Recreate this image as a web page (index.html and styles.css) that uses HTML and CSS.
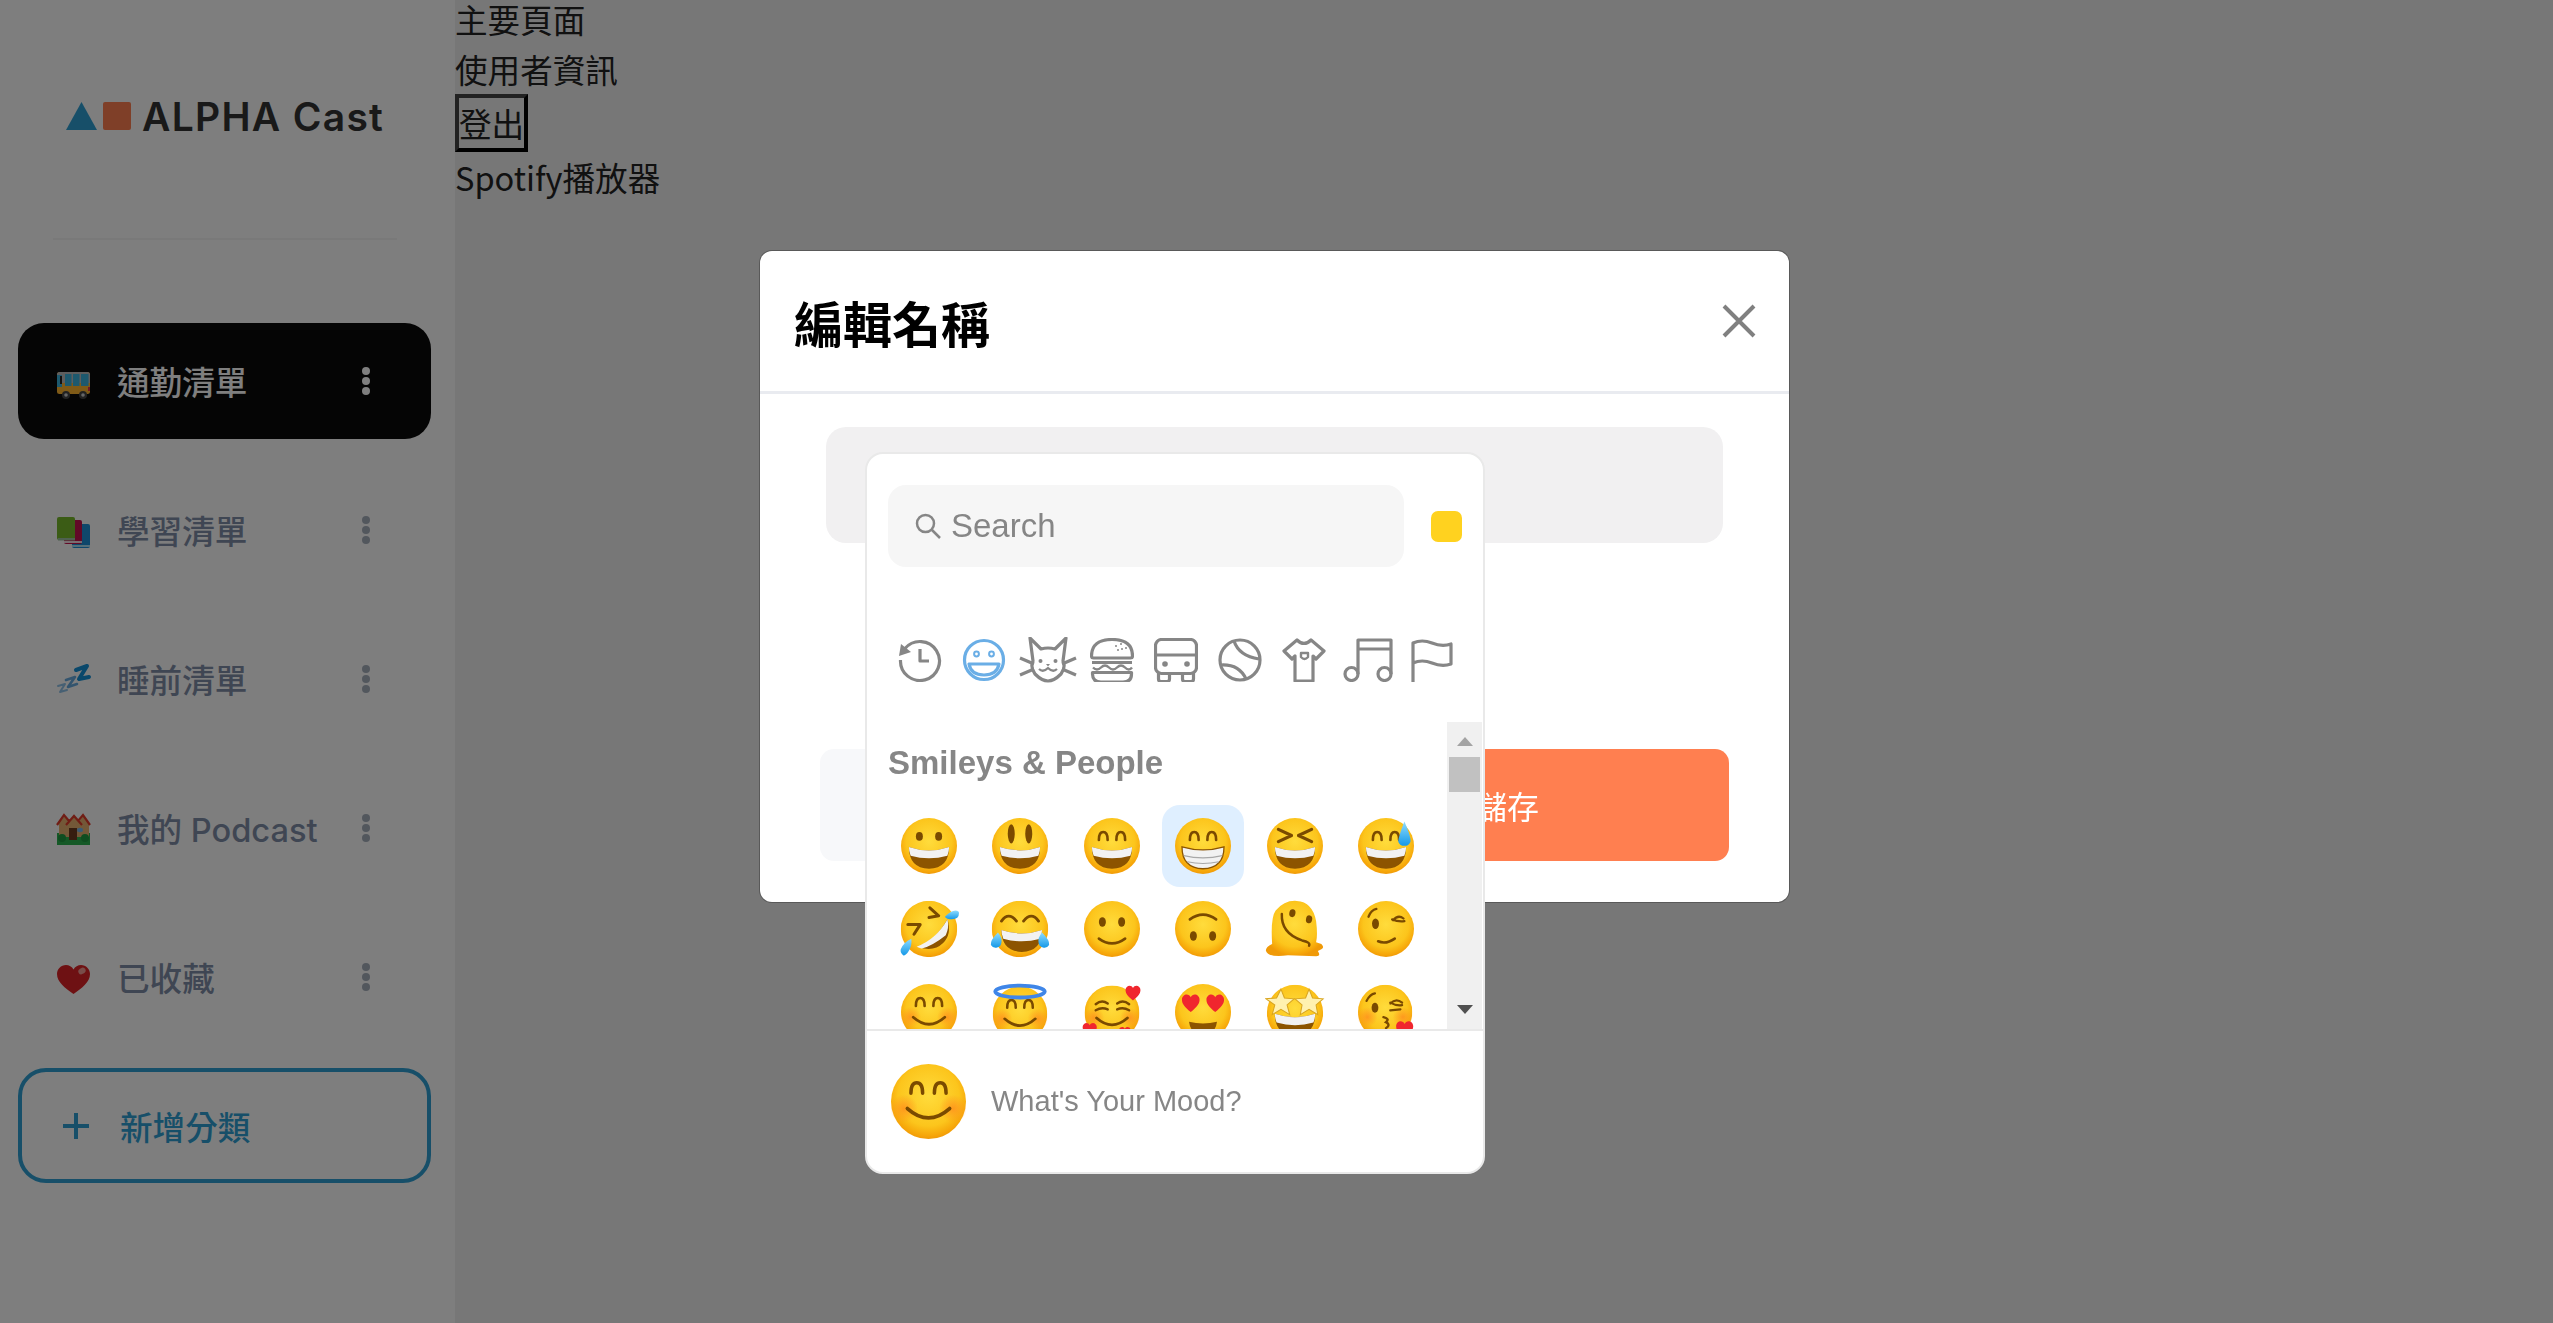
FILE: index.html
```html
<!DOCTYPE html>
<html lang="zh-Hant">
<head>
<meta charset="utf-8">
<title>ALPHA Cast</title>
<link rel="stylesheet" href="styles.css">
</head>
<body>
<svg class="defs" aria-hidden="true">
  <defs>
    <radialGradient id="face" cx="50%" cy="42%" r="58%">
      <stop offset="0" stop-color="#ffdc3c"/>
      <stop offset=".7" stop-color="#fcc51c"/>
      <stop offset=".93" stop-color="#f6a509"/>
      <stop offset="1" stop-color="#f09a08"/>
    </radialGradient>
    <radialGradient id="blushL" cx="50%" cy="50%" r="50%"><stop offset="0" stop-color="#ff8a1e" stop-opacity=".75"/><stop offset="1" stop-color="#ff8a1e" stop-opacity="0"/></radialGradient>
    <linearGradient id="drop" x1="0" y1="0" x2="0" y2="1"><stop offset="0" stop-color="#8fdcff"/><stop offset="1" stop-color="#1599e8"/></linearGradient>
    <symbol id="f" viewBox="0 0 64 64"><circle cx="32" cy="32" r="32" fill="url(#face)"/></symbol>
    <symbol id="arches" viewBox="0 0 64 64"><path d="M17 25Q17 16 22 16Q27 16 27 25M37 25Q37 16 42 16Q47 16 47 25" fill="none" stroke="#7a4a00" stroke-width="3" stroke-linecap="round"/></symbol>
    <symbol id="laugh" viewBox="0 0 64 64"><path d="M9 33Q32 41 55 33Q55 57 32 58Q9 57 9 33Z" fill="#8c5400"/><path d="M9 33Q32 41 55 33Q55 38 53 43Q32 49 11 43Q9 38 9 33Z" fill="#f2f2f2"/></symbol>
    <symbol id="blush" viewBox="0 0 64 64"><circle cx="32" cy="32" r="32" fill="url(#face)"/><circle cx="11" cy="38" r="12" fill="url(#blushL)"/><circle cx="53" cy="38" r="12" fill="url(#blushL)"/></symbol>
    <symbol id="smile" viewBox="0 0 64 64"><path d="M14 38Q32 54 50 38" fill="none" stroke="#7a4a00" stroke-width="3.200" stroke-linecap="round"/></symbol>
    <symbol id="heart" viewBox="0 0 24 24"><path d="M12 23C5 17 1 13 1 7.500C1 3.500 4 1 7 1C9 1 11 2 12 4.500C13 2 15 1 17 1C20 1 23 3.500 23 7.500C23 13 19 17 12 23Z" fill="#f0262e"/></symbol>

    <symbol id="e1" viewBox="0 0 64 64"><use href="#f"/><ellipse cx="21" cy="21" rx="4" ry="5" fill="#7a4a00"/><ellipse cx="43" cy="21" rx="4" ry="5" fill="#7a4a00"/><use href="#laugh"/></symbol>
    <symbol id="e2" viewBox="0 0 64 64"><use href="#f"/><ellipse cx="22" cy="18" rx="4" ry="11" fill="#7a4a00"/><ellipse cx="42" cy="18" rx="4" ry="11" fill="#7a4a00"/><use href="#laugh"/></symbol>
    <symbol id="e3" viewBox="0 0 64 64"><use href="#f"/><use href="#arches"/><use href="#laugh"/></symbol>
    <symbol id="e4" viewBox="0 0 64 64"><use href="#f"/><use href="#arches"/><path d="M8 33Q32 40 56 33Q56 57 32 58Q8 57 8 33Z" fill="#f2f2f2" stroke="#8c5400" stroke-width="1.500"/><path d="M10 43Q32 48 54 43M14 50Q32 54 50 50" fill="none" stroke="#a8a8a8" stroke-width="1.400"/></symbol>
    <symbol id="e5" viewBox="0 0 64 64"><use href="#f"/><path d="M13 13L28 20L13 27M51 13L36 20L51 27" fill="none" stroke="#7a4a00" stroke-width="3.600" stroke-linecap="round" stroke-linejoin="round"/><use href="#laugh"/></symbol>
    <symbol id="e6" viewBox="0 0 64 64"><use href="#f"/><use href="#arches"/><use href="#laugh"/><path d="M53 4Q61 22 60 27A7.500 7.500 0 0 1 46 27Q46 22 53 4Z" fill="url(#drop)"/></symbol>

    <symbol id="e7" viewBox="0 0 68 64"><g transform="translate(2 0)"><use href="#f" width="64" height="64"/><path d="M33 8L43 17L32 19M8 27L22 27L15 38" fill="none" stroke="#7a4a00" stroke-width="3.400" stroke-linecap="round" stroke-linejoin="round"/><path d="M53 21Q58 38 48 48Q38 58 21 53Q40 44 53 21Z" fill="#8c5400"/><path d="M53 21Q55 31 51 39Q36 51 24 54Q22 54 18 52Q40 44 53 21Z" fill="#f2f2f2"/></g><path d="M68 14Q68 21 60 21Q54 21 52 18Q59 11 64 11Q68 11 68 14Z" fill="url(#drop)"/><path d="M5 62Q1 59 2 55Q5 47 14 43Q15 51 11 57Q8 62 5 62Z" fill="url(#drop)"/></symbol>
    <symbol id="e8" viewBox="0 0 68 64"><g transform="translate(2 0)"><use href="#f" width="64" height="64"/><path d="M11 23Q19 12 28 23M36 23Q45 12 53 23" fill="none" stroke="#7a4a00" stroke-width="3.200" stroke-linecap="round"/><use href="#laugh"/></g><path d="M9 36Q14 42 13 47A6.500 6.500 0 0 1 1 50Q0 45 9 36Z" fill="url(#drop)"/><path d="M59 36Q68 45 67 50A6.500 6.500 0 0 1 55 47Q54 42 59 36Z" fill="url(#drop)"/></symbol>
    <symbol id="e9" viewBox="0 0 64 64"><use href="#f"/><ellipse cx="21" cy="24" rx="4" ry="5.500" fill="#7a4a00"/><ellipse cx="43" cy="24" rx="4" ry="5.500" fill="#7a4a00"/><path d="M17 43Q32 54 47 43" fill="none" stroke="#7a4a00" stroke-width="3" stroke-linecap="round"/></symbol>
    <symbol id="e10" viewBox="0 0 64 64"><use href="#f"/><ellipse cx="21" cy="40" rx="4" ry="5.500" fill="#7a4a00"/><ellipse cx="43" cy="40" rx="4" ry="5.500" fill="#7a4a00"/><path d="M17 21Q32 10 47 21" fill="none" stroke="#7a4a00" stroke-width="3" stroke-linecap="round"/></symbol>
    <symbol id="e11" viewBox="0 0 68 66"><path d="M8 50Q6 20 12 12Q22 0 36 1Q54 2 58 24Q60 40 58 48L64 50Q68 54 64 56L60 58Q64 64 58 64L26 63Q4 66 1 58Q0 54 8 50Z" fill="url(#face)"/><ellipse cx="31" cy="15" rx="3.500" ry="4.500" fill="#7a4a00" transform="rotate(12 31 15)"/><ellipse cx="50" cy="22" rx="3.500" ry="4.500" fill="#7a4a00" transform="rotate(12 50 22)"/><path d="M19 16Q18 38 42 46Q52 48 50 52" fill="none" stroke="#7a4a00" stroke-width="2.800" stroke-linecap="round"/></symbol>
    <symbol id="e12" viewBox="0 0 64 64"><use href="#f"/><path d="M12 18Q15 10 21 9M40 22Q46 15 52 20M39 21Q46 24 53 23" fill="none" stroke="#7a4a00" stroke-width="2.600" stroke-linecap="round"/><ellipse cx="20" cy="26" rx="4" ry="6" fill="#7a4a00"/><path d="M23 46Q32 50 42 43" fill="none" stroke="#7a4a00" stroke-width="3" stroke-linecap="round"/></symbol>

    <symbol id="e13" viewBox="0 0 64 64"><use href="#blush"/><use href="#arches"/><use href="#smile"/></symbol>
    <symbol id="e14" viewBox="0 0 68 68"><g transform="translate(2 4)"><use href="#blush" width="64" height="64"/><use href="#arches" width="64" height="64"/><use href="#smile" width="64" height="64"/></g><ellipse cx="34" cy="10" rx="29" ry="7" fill="none" stroke="#3f86e8" stroke-width="4.500"/></symbol>
    <symbol id="e15" viewBox="0 0 70 66"><g transform="translate(3 2)"><use href="#blush" width="64" height="64"/><path d="M13 22Q20 16 27 21M38 21Q45 16 52 22M13 29Q20 25 27 28M38 28Q45 25 52 29" fill="none" stroke="#7a4a00" stroke-width="2.800" stroke-linecap="round"/><use href="#smile" width="64" height="64"/></g><use href="#heart" x="50" y="0" width="19" height="22"/><use href="#heart" x="0" y="44" width="18" height="20"/><use href="#heart" x="42" y="50" width="16" height="15"/></symbol>
    <symbol id="e16" viewBox="0 0 64 64"><use href="#f"/><use href="#heart" x="7" y="10" width="22" height="24"/><use href="#heart" x="35" y="10" width="22" height="24"/><path d="M16 43Q32 47 48 43Q46 58 32 58Q18 58 16 43Z" fill="#8c5400"/></symbol>
    <symbol id="e17" viewBox="0 0 68 66"><g transform="translate(2 2)"><use href="#f" width="64" height="64"/><use href="#laugh" width="64" height="64"/></g><path d="M18 7L22 17L33 18L25 25L28 36L18 30L8 36L11 25L1 18L13 17Z" fill="#fff1b0" stroke="#d9a520" stroke-width="1.200"/><path d="M50 7L54 17L66 18L58 25L60 36L50 30L40 36L42 25L34 18L46 17Z" fill="#fff1b0" stroke="#d9a520" stroke-width="1.200"/></symbol>
    <symbol id="e18" viewBox="0 0 66 64"><use href="#blush" width="64" height="64"/><path d="M10 19Q14 11 20 10M38 22Q45 15 52 21M38 21Q45 25 52 24M38 30L50 29" fill="none" stroke="#7a4a00" stroke-width="2.600" stroke-linecap="round"/><ellipse cx="20" cy="27" rx="4" ry="6" fill="#7a4a00"/><path d="M30 38Q38 40 33 44Q39 47 33 51" fill="none" stroke="#7a4a00" stroke-width="2.800" stroke-linecap="round"/><use href="#heart" x="44" y="42" width="22" height="22"/></symbol>
  </defs>
</svg>

<div class="app">
  <aside class="sidebar">
    <div class="logo">
      <svg class="logo-tri" viewBox="0 0 31 28"><path d="M15.500 0L31 28H0Z"/></svg>
      <span class="logo-sq"></span>
      <span class="logo-text">ALPHA Cast</span>
    </div>
    <hr class="side-rule">
    <ul class="cats">
      <li class="cat cat-active">
        <svg class="cat-emoji" viewBox="0 0 33 33"><g transform="translate(0 3)"><rect x="0" y="4" width="33" height="22" rx="2.500" fill="#ffb52e"/><path d="M0 15V6.500A2.500 2.500 0 0 1 2.500 4H30.500A2.500 2.500 0 0 1 33 6.500V15Z" fill="#bdbdbd"/><path d="M8 6h6.500v12H8ZM16 6h6.500v12H16ZM24 6h7.500v12H24Z" fill="#3bb2dd"/><path d="M0 7h5v12H0Z" fill="#3bb2dd"/><path d="M3 8h2v8H3Z" fill="#222"/><circle cx="9" cy="27" r="4" fill="#444"/><circle cx="9" cy="27" r="1.800" fill="#ccc"/><circle cx="26" cy="27" r="4" fill="#444"/><circle cx="26" cy="27" r="1.800" fill="#ccc"/><rect x="31" y="19" width="2" height="4" fill="#e2304c"/></g></svg>
        <span class="cat-name">通勤清單</span>
        <span class="kebab"><i></i><i></i><i></i></span>
      </li>
      <li class="cat">
        <svg class="cat-emoji" viewBox="0 0 33 33"><g transform="translate(0 3)"><rect x="15" y="7" width="18" height="24" rx="2" fill="#1f8fd6"/><path d="M15 28h18v2H15Z" fill="#a8dcf2"/><rect x="7" y="3" width="18" height="24" rx="2" fill="#c4134f"/><path d="M7 24h18v2H7Z" fill="#f3dce3"/><rect x="0" y="0" width="18" height="23" rx="2" fill="#77b82b"/><path d="M1 21h17v2.500H1Z" fill="#9ec3a0"/></g></svg>
        <span class="cat-name">學習清單</span>
        <span class="kebab"><i></i><i></i><i></i></span>
      </li>
      <li class="cat">
        <svg class="cat-emoji" viewBox="0 0 33 33"><path d="M19 7L30 3L22 16L32 14" fill="none" stroke="#1490d6" stroke-width="4" stroke-linejoin="round" stroke-linecap="round"/><path d="M9 17L18 14L11 24L20 21" fill="none" stroke="#66a9dd" stroke-width="2.600" stroke-linejoin="round" stroke-linecap="round"/><path d="M1 23L8 21L3 29L10 27" fill="none" stroke="#8fc1e6" stroke-width="2" stroke-linejoin="round" stroke-linecap="round"/></svg>
        <span class="cat-name">睡前清單</span>
        <span class="kebab"><i></i><i></i><i></i></span>
      </li>
      <li class="cat">
        <svg class="cat-emoji" viewBox="0 0 33 33"><rect x="0" y="21" width="33" height="12" fill="#2bb34f"/><path d="M2 10L8 4L13 9L17 5L22 10L26 4L32 11V25H2Z" fill="#e6b070"/><path d="M0 13L7 3L12 9M9 13L17 4L25 13M21 9L26 3L33 13" fill="none" stroke="#e03a2a" stroke-width="2.200"/><rect x="12" y="16" width="8" height="12" fill="#6d3a1f"/><ellipse cx="23" cy="18" rx="3" ry="2.200" fill="#77b4e6"/><circle cx="5" cy="26" r="4" fill="#1f9a41"/><circle cx="28" cy="26" r="4" fill="#1f9a41"/></svg>
        <span class="cat-name">我的 Podcast</span>
        <span class="kebab"><i></i><i></i><i></i></span>
      </li>
      <li class="cat">
        <svg class="cat-emoji" viewBox="0 0 33 33"><g transform="translate(0 1)"><path d="M16.500 32C8 26 0 20 0 12C0 7 4 3 9 3C12 3 15 4.500 16.500 7.500C18 4.500 21 3 24 3C29 3 33 7 33 12C33 20 25 26 16.500 32Z" fill="#dd2326"/><ellipse cx="25" cy="9" rx="3.800" ry="3" fill="#f29a94" transform="rotate(-30 25 9)"/></g></svg>
        <span class="cat-name">已收藏</span>
        <span class="kebab"><i></i><i></i><i></i></span>
      </li>
    </ul>
    <button class="add-cat" type="button">
      <svg class="add-plus" viewBox="0 0 28 28"><path d="M14 1V27M1 14H27"/></svg>
      <span>新增分類</span>
    </button>
  </aside>

  <main class="main">
    <nav class="topnav">
      <div class="nav-line">主要頁面</div>
      <div class="nav-line">使用者資訊</div>
      <button class="logout" type="button">登出</button>
      <div class="nav-line">Spotify播放器</div>
    </nav>
  </main>
</div>

<div class="overlay">
  <section class="modal">
    <header class="modal-head">
      <h2 class="modal-title">編輯名稱</h2>
      <svg class="modal-close" viewBox="0 0 34 34"><path d="M2 2L32 32M32 2L2 32"/></svg>
    </header>
    <div class="modal-body">
      <div class="name-field">
        <div class="picker">
          <div class="search-row">
            <div class="search">
              <svg class="search-ico" viewBox="0 0 26 26"><circle cx="10.500" cy="10.500" r="8.500"/><path d="M17 17L25 25"/></svg>
              <span>Search</span>
            </div>
            <span class="swatch"></span>
          </div>
          <div class="tabs">
            <span class="tab"><svg class="ico" viewBox="0 0 44 44"><path d="M7 10.500A19.500 19.500 0 1 1 2.500 22"/><path class="solid" d="M1 18L3 6L13 14Z"/><path d="M22 11V23H31"/></svg></span>
            <span class="tab tab-on"><svg class="ico" viewBox="0 0 44 44"><circle cx="22" cy="22" r="19.500"/><circle cx="14.500" cy="16" r="2.400" stroke-width="2"/><circle cx="29.500" cy="16" r="2.400" stroke-width="2"/><path d="M7 26H37Q35 37 22 37Q9 37 7 26Z"/></svg></span>
            <span class="tab"><svg class="ico ico-cat" viewBox="0 0 58 46"><path d="M14 24L11 1L22 12Q29 10 36 12L47 1L44 24Q47 30 42 37Q35 44 29 44Q23 44 16 37Q11 30 14 24Z"/><path d="M1 21L15 27M1 38L15 32M57 21L43 27M57 38L43 32"/><path class="solid" d="M27 27h4l-2 2.500Z"/><circle class="solid" cx="21.500" cy="24" r="2"/><circle class="solid" cx="36.500" cy="24" r="2"/><path d="M20 32Q24 36 29 31Q34 36 38 32" stroke-width="2.200"/></svg></span>
            <span class="tab"><svg class="ico" viewBox="0 0 44 44"><path d="M1.500 18Q1.500 1.500 22 1.500Q42.500 1.500 42.500 18Q42.500 20 40.500 20H3.500Q1.500 20 1.500 18Z"/><path d="M2 24.500H42"/><path d="M3 29.500Q7 33.500 11 29.500T19 29.500T27 29.500T35 29.500T42 29.500" stroke-width="2.400"/><path d="M2.500 34.500H41.500V36Q41.500 44 33 44H11Q2.500 44 2.500 36Z"/><g class="solid"><circle cx="26" cy="8" r="1"/><circle cx="31" cy="6" r="1"/><circle cx="32" cy="11" r="1"/><circle cx="36" cy="10" r="1"/><circle cx="28" cy="12" r="1"/></g></svg></span>
            <span class="tab"><svg class="ico" viewBox="0 0 44 44"><rect x="1.500" y="1.500" width="41" height="34" rx="6"/><path d="M1.500 17H42.500"/><path d="M4.500 35V41Q4.500 43.500 7 43.500H13Q15.500 43.500 15.500 41V35M28.500 35V41Q28.500 43.500 31 43.500H37Q39.500 43.500 39.500 41V35"/><circle class="solid" cx="11" cy="26" r="2.800"/><circle class="solid" cx="33" cy="26" r="2.800"/></svg></span>
            <span class="tab"><svg class="ico" viewBox="0 0 44 44"><circle cx="22" cy="22" r="20"/><path d="M16 3Q21 18 41 21M3 27Q21 26 28 41"/></svg></span>
            <span class="tab"><svg class="ico" viewBox="0 0 44 44"><path d="M15 2L2 13L10 21L13 18V43H31V18L34 21L42 13L29 2Q22 9 15 2Z"/><path d="M19 15H26V19Q22.500 23 19 19Z" stroke-width="2.400"/></svg></span>
            <span class="tab"><svg class="ico ico-music" viewBox="0 0 50 44"><path d="M15 36V2H48V36M15 11H48"/><circle cx="8.500" cy="36" r="6.500"/><circle cx="41.500" cy="36" r="6.500"/></svg></span>
            <span class="tab"><svg class="ico" viewBox="0 0 44 44"><path d="M3 44V5Q12 1 22 5Q32 9 41 6V26Q32 29 22 25Q12 21 3 25" stroke-linecap="round"/></svg></span>
          </div>
          <div class="list-wrap">
            <div class="list">
              <h3 class="list-title">Smileys &amp; People</h3>
              <div class="grid">
                <span class="cell"><svg class="emoji" viewBox="0 0 64 64"><use href="#e1"/></svg></span>
                <span class="cell"><svg class="emoji" viewBox="0 0 64 64"><use href="#e2"/></svg></span>
                <span class="cell"><svg class="emoji" viewBox="0 0 64 64"><use href="#e3"/></svg></span>
                <span class="cell cell-on"><svg class="emoji" viewBox="0 0 64 64"><use href="#e4"/></svg></span>
                <span class="cell"><svg class="emoji" viewBox="0 0 64 64"><use href="#e5"/></svg></span>
                <span class="cell"><svg class="emoji" viewBox="0 0 64 64"><use href="#e6"/></svg></span>
                <span class="cell"><svg class="emoji emoji-w" viewBox="0 0 68 64"><use href="#e7"/></svg></span>
                <span class="cell"><svg class="emoji emoji-w" viewBox="0 0 68 64"><use href="#e8"/></svg></span>
                <span class="cell"><svg class="emoji" viewBox="0 0 64 64"><use href="#e9"/></svg></span>
                <span class="cell"><svg class="emoji" viewBox="0 0 64 64"><use href="#e10"/></svg></span>
                <span class="cell"><svg class="emoji emoji-w" viewBox="0 0 68 66"><use href="#e11"/></svg></span>
                <span class="cell"><svg class="emoji" viewBox="0 0 64 64"><use href="#e12"/></svg></span>
                <span class="cell"><svg class="emoji" viewBox="0 0 64 64"><use href="#e13"/></svg></span>
                <span class="cell"><svg class="emoji emoji-w" viewBox="0 0 68 68"><use href="#e14"/></svg></span>
                <span class="cell"><svg class="emoji emoji-w" viewBox="0 0 70 66"><use href="#e15"/></svg></span>
                <span class="cell"><svg class="emoji" viewBox="0 0 64 64"><use href="#e16"/></svg></span>
                <span class="cell"><svg class="emoji emoji-w" viewBox="0 0 68 66"><use href="#e17"/></svg></span>
                <span class="cell"><svg class="emoji" viewBox="0 0 66 64"><use href="#e18"/></svg></span>
              </div>
            </div>
            <div class="scrollbar">
              <span class="arrow arrow-up"></span>
              <span class="thumb"></span>
              <span class="arrow arrow-down"></span>
            </div>
          </div>
          <div class="preview">
            <svg class="preview-emoji" viewBox="0 0 64 64"><use href="#e13"/></svg>
            <span>What's Your Mood?</span>
          </div>
        </div>
      </div>
      <div class="actions">
        <button class="btn btn-cancel" type="button">取消</button>
        <button class="btn btn-save" type="button">儲存</button>
      </div>
    </div>
  </section>
</div>
</body>
</html>
```

FILE: styles.css
```css
* { box-sizing: border-box; }

html, body { height: 100%; }

body {
  margin: 0;
  font-family: "Noto Sans CJK TC", "Noto Sans", sans-serif;
  background: #eeeeee;
  color: #1f1f1f;
  overflow: hidden;
}

.defs { position: absolute; width: 0; height: 0; }

.app { display: flex; height: 1323px; }

/* sidebar */
.sidebar {
  width: 455px;
  flex: none;
  background: #fcfcfc;
  padding: 0 24px 0 18px;
}

.logo {
  display: flex;
  align-items: center;
  height: 232px;
  padding-left: 48px;
}

.logo-tri { width: 31px; height: 28px; fill: #2f9fd3; }
.logo-sq { width: 28px; height: 28px; margin-left: 6px; border-radius: 2px; background: #ff7f50; }
.logo-text {
  margin-left: 11px;
  font-family: Inter, "Noto Sans", sans-serif;
  font-size: 39px;
  font-weight: 600;
  letter-spacing: 1.3px;
  color: #333333;
  white-space: nowrap;
}

.side-rule {
  height: 2px;
  margin: 6px 34px 0 35px;
  border: 0;
  background: #f3f3f3;
}

.cats {
  list-style: none;
  margin: 83px 0 0;
  padding: 0;
  display: flex;
  flex-direction: column;
  gap: 33px;
}

.cat {
  display: flex;
  align-items: center;
  height: 116px;
  padding: 0 61px 0 39px;
  border-radius: 26px;
  font-family: Inter, "Noto Sans CJK TC", sans-serif;
  font-size: 32.600px;
  font-weight: 500;
  color: #7f8da6;
}

.cat-active { background: #0a0a0a; color: #ffffff; }
.cat-emoji { width: 33px; height: 33px; flex: none; overflow: visible; }
.cat-name { margin-left: 27px; margin-top: -2px; white-space: nowrap; }

.kebab {
  margin-left: auto;
  display: flex;
  flex-direction: column;
  gap: 2px;
  width: 8px;
  color: #a5aebb;
}
.cat-active .kebab { color: #ffffff; }
.kebab i { display: block; width: 8px; height: 8px; border-radius: 50%; background: currentColor; }

.add-cat {
  display: flex;
  align-items: center;
  width: 413px;
  height: 115px;
  margin-top: 33px;
  padding: 0 0 0 40px;
  border: 4px solid #2f9fd3;
  border-radius: 28px;
  background: transparent;
  font-family: "Noto Sans CJK TC", sans-serif;
  font-size: 32.600px;
  font-weight: 500;
  color: #2f9fd3;
}
.add-plus { width: 28px; height: 28px; flex: none; fill: none; stroke: currentColor; stroke-width: 4; }
.add-cat span { margin-left: 30px; }

/* main */
.main { flex: 1; min-width: 0; }

.topnav { margin-top: -6px; font-size: 32.600px; color: #222; }
.nav-line { line-height: 50px; }
.logout {
  display: block;
  height: 58px;
  padding: 0;
  border: 4px outset #444;
  background: transparent;
  font: inherit;
  line-height: 1;
  color: #222;
}

/* overlay + modal */
.overlay { position: fixed; inset: 0; background: rgba(0, 0, 0, 0.5); }

.modal {
  position: absolute;
  left: 760px;
  top: 251px;
  width: 1029px;
  height: 651px;
  border-radius: 12px;
  background: #ffffff;
  box-shadow: 0 0 0 1px rgba(0, 0, 0, 0.25);
}

.modal-head {
  display: flex;
  align-items: center;
  justify-content: space-between;
  height: 143px;
  padding: 0 33px 0 34px;
  border-bottom: 3px solid #e9ebf0;
}

.modal-title {
  margin: 0;
  font-size: 49px;
  font-weight: 600;
  color: #000;
  line-height: 1;
}

.modal-close { width: 34px; height: 34px; fill: none; stroke: #808080; stroke-width: 4; }

.modal-body { padding: 33px 60px 42px; }

.name-field {
  position: relative;
  height: 116px;
  margin: 0 6px;
  border-radius: 20px;
  background: #f1f0f1;
}

.actions {
  display: grid;
  grid-template-columns: 1fr 1fr;
  gap: 21px;
  margin-top: 206px;
}

.btn {
  height: 112px;
  border: 0;
  border-radius: 14px;
  font-family: "Noto Sans CJK TC", sans-serif;
  font-size: 32px;
}
.btn-cancel { background: #f7f8fa; color: #444; }
.btn-save { background: #ff7f50; color: #fff; }

/* emoji picker */
.picker {
  position: absolute;
  left: 39px;
  top: 25px;
  z-index: 2;
  display: flex;
  flex-direction: column;
  width: 620px;
  height: 722px;
  border: 2px solid #e9e9e9;
  border-radius: 18px;
  background: #fff;
  font-family: "Liberation Sans", Arial, sans-serif;
  color: #868686;
  overflow: hidden;
}

.search-row {
  display: flex;
  align-items: center;
  gap: 27px;
  padding: 31px 21px 0;
}

.search {
  display: flex;
  align-items: center;
  gap: 10px;
  width: 516px;
  height: 82px;
  padding-left: 27px;
  border-radius: 18px;
  background: #f6f6f6;
  font-size: 33px;
}
.search-ico { width: 26px; height: 26px; fill: none; stroke: #868686; stroke-width: 2.500; }

.swatch { width: 31px; height: 31px; border-radius: 7px; background: #ffd21f; }

.tabs {
  display: flex;
  height: 44px;
  margin-top: 71px;
  padding-left: 21px;
}
.tab {
  display: flex;
  align-items: center;
  justify-content: center;
  width: 64px;
  flex: none;
  color: #868686;
}
.tab-on { color: #6aaee6; }
.ico { width: 44px; height: 44px; flex: none; fill: none; stroke: currentColor; stroke-width: 3.200; stroke-linejoin: round; }
.ico-cat { width: 58px; height: 46px; }
.ico-music { width: 50px; }
.ico .solid { fill: currentColor; stroke: none; }

.list-wrap { display: flex; height: 307px; margin-top: 40px; }
.list { flex: 1; min-width: 0; overflow: hidden; padding-left: 21px; }

.list-title {
  margin: 20px 0 21px;
  font-size: 33px;
  line-height: 42px;
  font-weight: 700;
  color: #868686;
}

.grid {
  display: grid;
  grid-template-columns: repeat(6, 82px);
  grid-auto-rows: 82px;
  column-gap: 9.400px;
  row-gap: 1px;
}

.cell { display: flex; align-items: center; justify-content: center; border-radius: 18px; }
.cell-on { background: #dfefff; }
.emoji { width: 56px; height: 56px; flex: none; overflow: visible; }
.emoji-w { width: 60px; height: 58px; }

.scrollbar {
  flex: none;
  width: 35px;
  margin-right: 1px;
  background: #f0f0f0;
  display: flex;
  flex-direction: column;
  align-items: center;
}

.arrow { width: 0; height: 0; border-left: 8px solid transparent; border-right: 8px solid transparent; }
.arrow-up { margin-top: 15px; border-bottom: 9px solid #a3a3a3; }
.thumb { width: 31px; height: 35px; margin-top: 11px; background: #c1c1c1; }
.arrow-down { margin-top: auto; margin-bottom: 15px; border-top: 9px solid #505050; }

.preview {
  flex: 1;
  display: flex;
  align-items: center;
  gap: 25px;
  padding-left: 24px;
  border-top: 2px solid #e9e9e9;
  font-size: 29px;
  color: #868686;
}
.preview-emoji { width: 75px; height: 75px; flex: none; }
```
